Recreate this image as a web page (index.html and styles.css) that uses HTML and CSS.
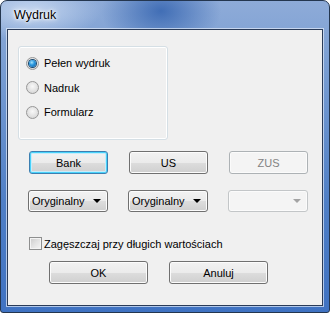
FILE: index.html
```html
<!DOCTYPE html>
<html>
<head>
    <meta http-equiv="Content-Type" content="text/html; charset=utf-8" />
    <title>Wydruk</title>
    <link rel="stylesheet" href="styles.css">
</head>
<body>

<div class="win">
    <div class="win-title">Wydruk</div>

    <div class="win-client">

        <!--rodzaj wydruku-->
        <div class="group">
            <label class="radio-row"><span class="radio radio-on"></span>Pełen wydruk</label>
            <label class="radio-row"><span class="radio"></span>Nadruk</label>
            <label class="radio-row"><span class="radio"></span>Formularz</label>
        </div>

        <div class="row-buttons">
            <a href="#" class="btn btn-default">Bank</a>
            <a href="#" class="btn">US</a>
            <a href="#" class="btn btn-disabled">ZUS</a>
        </div>

        <div class="row-combos">
            <div class="combo"><span class="combo-text">Oryginalny</span><span class="combo-arrow"></span></div>
            <div class="combo"><span class="combo-text">Oryginalny</span><span class="combo-arrow"></span></div>
            <div class="combo combo-disabled"><span class="combo-text"></span><span class="combo-arrow"></span></div>
        </div>

        <label class="check-row"><span class="check"></span>Zagęszczaj przy długich wartościach</label>

        <div class="row-bottom">
            <a href="#" class="btn btn-wide">OK</a>
            <a href="#" class="btn btn-wide">Anuluj</a>
        </div>

    </div>
</div>

</body>
</html>
```

FILE: styles.css
```css
body{
    padding: 0px;margin: 0px;
    font-family: "Liberation Sans", Arial, sans-serif;font-size: 11px;color: #000;
}

/*okno*/
.win{
    width: 330px;height: 313px;box-sizing: border-box;
    border: 1px solid #24364f;border-radius: 7px 7px 3px 3px;
    padding: 0px 6px 6px 6px;
    display: flex;flex-direction: column;
    background:
        radial-gradient(ellipse 60px 40px at 160px 10px, rgba(40,90,170,0.75), rgba(40,90,170,0) 100%),
        radial-gradient(ellipse 70px 30px at 30px 10px, rgba(210,225,245,0.8), rgba(210,225,245,0) 100%),
        linear-gradient(to bottom, #8eabd8 0px, #7b9fd3 60px, #4f7fc6 200px, #3f72c2 100%);
}

/*pasek tytulu*/
.win-title{
    height: 28px;line-height: 28px;padding-left: 7px;
    font-size: 12.5px;color: #000;
    text-shadow: 0 0 6px #fff, 0 0 4px #fff, 0 0 2px #fff;
}

/*obszar roboczy*/
.win-client{
    flex: 1;
    background: #f0f0f0;
    border: 1px solid #2a3b58;
    box-shadow: 0 0 0 1px rgba(225,235,250,0.7);
    padding-top: 16px;
}

/*ramka grupy*/
.group{
    width: 150px;height: 94px;box-sizing: border-box;
    margin-left: 10px;
    border: 1px solid #d5dfe5;border-radius: 3px;
    box-shadow: inset 0 0 0 1px #fff;
    padding: 4px 0px 0px 7px;
}
.radio-row{
    display: flex;align-items: center;
    height: 24px;
}
.radio-row + .radio-row{margin-top: 0.5px;}
.radio{
    width: 13px;height: 13px;box-sizing: border-box;
    border-radius: 50%;
    border: 1px solid #979797;
    background: radial-gradient(circle at 50% 40%, #f8f8f8 0%, #e6e6e6 45%, #cfcfcf 100%);
    margin-right: 5px;
    display: flex;align-items: center;justify-content: center;
}
.radio-on::after{
    content: "";
    width: 7px;height: 7px;border-radius: 50%;
    background: radial-gradient(circle at 40% 35%, #a8e4fb 0%, #2d9ae0 40%, #0c5aa0 100%);
    box-shadow: 0 0 0 1px #17486f;
}

/*przyciski*/
.row-buttons{
    display: flex;gap: 21px;
    margin-top: 11px;padding-left: 21px;
}
.btn{
    width: 79px;height: 23px;box-sizing: border-box;
    display: flex;align-items: center;justify-content: center;
    border: 1px solid #707070;border-radius: 3px;
    background: linear-gradient(to bottom, #f2f2f2 0%, #ebebeb 50%, #dddddd 51%, #cfcfcf 100%);
    box-shadow: inset 0 0 0 1px #fcfcfc;
    color: #000;text-decoration: none;
}
.btn-default{
    border-color: #3c7fb1;
    box-shadow: inset 0 0 0 1px #48d2fa, inset 0 0 0 2px #c6ecfb;
}
.btn-disabled{
    border-color: #adb2b5;
    background: #f4f4f4;
    box-shadow: inset 0 0 0 1px #fbfbfb;
    color: #838383;
}
.btn-wide{width: 99px;}

/*listy rozwijane*/
.row-combos{
    display: flex;gap: 20px;
    margin-top: 16px;padding-left: 20px;
}
.combo{
    width: 80px;height: 22px;box-sizing: border-box;
    display: flex;align-items: center;
    border: 1px solid #707070;border-radius: 3px;
    background: linear-gradient(to bottom, #f2f2f2 0%, #ebebeb 50%, #dddddd 51%, #cfcfcf 100%);
    box-shadow: inset 0 0 0 1px #fcfcfc;
    padding: 0px 6px 0px 3px;
}
.combo-text{flex: 1;}
.combo-arrow{
    width: 0px;height: 0px;
    border-left: 4px solid transparent;border-right: 4px solid transparent;
    border-top: 4px solid #000;
}
.combo-disabled{
    border-color: #c3c6c8;
    background: #f4f4f4;
    box-shadow: inset 0 0 0 1px #fbfbfb;
}
.combo-disabled .combo-arrow{border-top-color: #a3a3a3;}

/*pole wyboru*/
.check-row{
    display: flex;align-items: center;
    height: 13px;
    margin-top: 25px;padding-left: 21px;
}
.check{
    width: 13px;height: 13px;box-sizing: border-box;
    border: 1px solid #8e8f8f;
    background: linear-gradient(135deg, #cbcbcb 0%, #e3e3e3 50%, #f6f6f6 100%);
    box-shadow: inset 0 0 0 1px #f4f4f4;
    margin-right: 2px;
}

.row-bottom{
    display: flex;gap: 21px;
    margin-top: 11px;padding-left: 41px;
}
```
